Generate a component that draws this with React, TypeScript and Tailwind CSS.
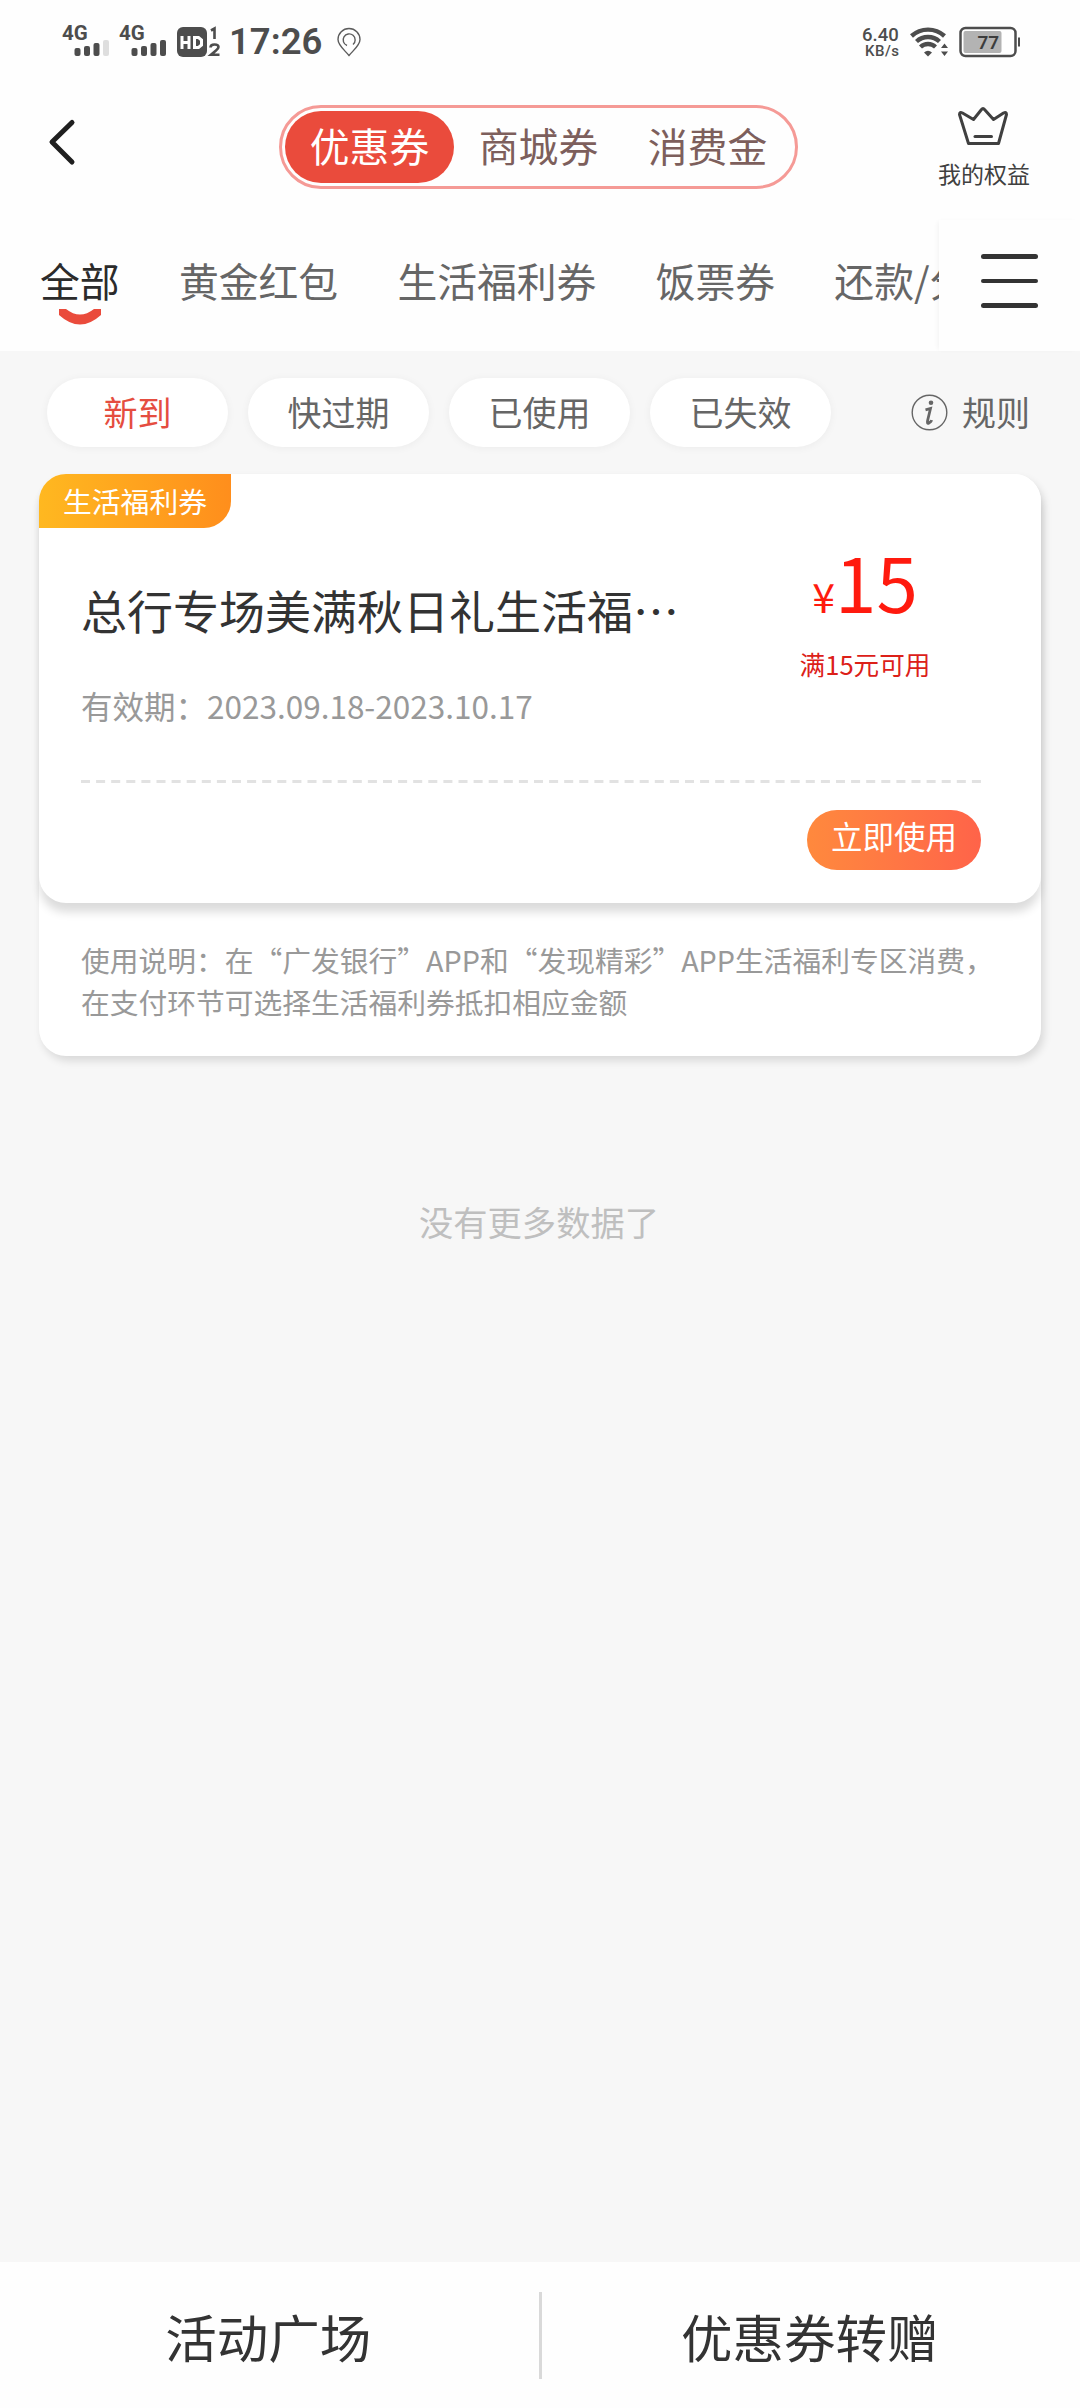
import React from 'react';

const segments = ['优惠券', '商城券', '消费金'];
const categories = ['全部', '黄金红包', '生活福利券', '饭票券', '还款/分期'];
const filters = ['新到', '快过期', '已使用', '已失效'];

const Signal = ({ weak = false }: { weak?: boolean }) => (
  <svg width="50" height="34" viewBox="0 0 50 34" className="shrink-0 overflow-visible">
    <text x="0" y="16" fontSize="20.5" fontWeight="700" fill="#4d4d4d" fontFamily="Roboto">4G</text>
    <rect x="12.5" y="24" width="6" height="8" rx="2" fill="#4d4d4d" />
    <rect x="22" y="22" width="6" height="10" rx="2" fill="#4d4d4d" />
    <rect x="31.5" y="19" width="6" height="13" rx="2" fill="#4d4d4d" />
    <rect x="41" y="16" width="6" height="16" rx="2" fill={weak ? '#dedede' : '#4d4d4d'} />
  </svg>
);

const StatusBar = () => (
  <div className="flex h-20 items-start justify-between pt-6 pl-[62px] pr-[60px] font-[Roboto] text-[#4d4d4d]">
    <div className="flex items-start">
      <div className="flex gap-[7px]">
        <Signal weak />
        <Signal />
      </div>
      <svg width="44" height="36" viewBox="0 0 44 36" className="ml-[8px] shrink-0">
        <rect x="0" y="3" width="30" height="30" rx="6" fill="#4d4d4d" />
        <g fill="none" stroke="#fff" strokeWidth="3">
          <path d="M5 12v13M12 12v13M5 18.5h7" />
          <path d="M17.5 13.5h4l3 2.5v5l-3 2.5h-4z" />
        </g>
        <path d="M34 6.500L37.500 4.500V15" fill="none" stroke="#4d4d4d" strokeWidth="2.600" />
        <path d="M33.500 23.500q0-3 4-3t4 2.500q0 1.500-2.500 3.500l-5 4.200h8.500" fill="none" stroke="#4d4d4d" strokeWidth="2.600" />
      </svg>
      <span className="ml-[8px] w-[95px] text-[36.5px] leading-[36px] font-semibold">17:26</span>
      <svg width="26" height="34" viewBox="0 0 26 34" fill="none" stroke="#5c5c5c" strokeWidth="1.4" className="ml-[12px] shrink-0">
        <path d="M13 31.500C9 26.500 2 21.500 2 15.500a11 11 0 0 1 22 0c0 6-7 11-11 16z" />
        <path d="M11 21.500a6 6 0 1 1 6-1" />
      </svg>
    </div>
    <div className="flex items-start">
      <div className="flex w-[40px] flex-col pt-[3px] font-medium">
        <span className="text-[18.5px] leading-[17px]">6.40</span>
        <span className="pl-[3px] text-[15px] leading-[15px] tracking-[0.5px]">KB/s</span>
      </div>
      <svg width="38" height="34" viewBox="0 0 38 34" className="ml-[8px] shrink-0">
        <g fill="none" stroke="#4d4d4d" strokeWidth="4.4">
          <path d="M1.500 12a24.500 24.500 0 0 1 33 0" />
          <path d="M6.500 17.500a17 17 0 0 1 23 0" />
          <path d="M10.500 23a11 11 0 0 1 15 0" />
        </g>
        <path d="M14 28.500q4-3.500 8 0l-4 4z" fill="#4d4d4d" />
        <path d="M31 24l3.500-4.500L38 24zM31 27.500h7L34.500 32z" fill="#4d4d4d" />
      </svg>
      <svg width="61" height="34" viewBox="0 0 61 34" className="ml-[11px] shrink-0">
        <rect x="1.500" y="4" width="55" height="28" rx="5" fill="#fff" stroke="#4d4d4d" strokeWidth="2.5" />
        <rect x="4.500" y="7" width="38" height="22" rx="2" fill="#b3b3b3" />
        <path d="M60 13.500v9" stroke="#4d4d4d" strokeWidth="2" />
        <text x="18.5" y="25" fontSize="19" fontWeight="600" fill="#3d3d3d" fontFamily="Roboto">77</text>
      </svg>
    </div>
  </div>
);

const Header = () => (
  <header className="flex h-[140px] items-start pl-[47px] pr-[50px]">
    <svg width="30" height="50" viewBox="0 0 30 50" fill="none" stroke="#1f1f1f" strokeWidth="5" strokeLinecap="round" strokeLinejoin="round" className="mt-[37px]">
      <path d="M25 5.500L5 25l20 20" />
    </svg>
    <div className="mt-[25px] ml-[202px] flex h-[84px] w-[519px] rounded-full border-[3px] border-[#f59a96] p-[3px]">
      {segments.map((name, i) => (
        <div
          key={name}
          className={`flex h-full w-[169px] items-center justify-center rounded-full pb-[5px] text-[39.8px] ${
            i === 0 ? 'bg-[#ea4b3c] text-white' : 'text-[#7d5f5c]'
          }`}
        >
          {name}
        </div>
      ))}
    </div>
    <div className="ml-auto flex w-[92px] flex-col items-center pt-[25px]">
      <svg width="52" height="42" viewBox="0 0 52 42" fill="none" stroke="#404040" strokeWidth="3" strokeLinecap="round" strokeLinejoin="round" className="mr-[3px] shrink-0">
        <path d="M11.500 38.500L2.500 9.500Q2.500 6.500 5.500 8L16.500 14.500L24.500 4.500Q26 2.500 27.500 4.500L36.500 14.500L46.500 8Q49.500 6.500 49.500 9.500L41.500 38.500Z" />
        <path d="M18 31.500h16.500" />
      </svg>
      <span className="mt-[9px] text-[23px] leading-[34px] whitespace-nowrap text-[#404040]">我的权益</span>
    </div>
  </header>
);

const CategoryTabs = () => (
  <nav className="flex h-[131px]">
    <div className="flex w-[939px] gap-[59.3px] overflow-hidden pt-[31px] pl-[40px]">
      {categories.map((name, i) => (
        <div key={name} className="flex shrink-0 flex-col items-center">
          <span className={`text-[39.8px] leading-[58px] whitespace-nowrap ${i === 0 ? 'text-[#2b2b2b]' : 'text-[#666]'}`}>
            {name}
          </span>
          {i === 0 && (
            <svg width="44" height="17" viewBox="0 0 44 17">
              <path d="M1 0H8Q22 11 36 0H43V6Q22 25 1 6Z" fill="#ea4b3c" />
            </svg>
          )}
        </div>
      ))}
    </div>
    <div className="flex w-[141px] flex-col items-center gap-5 pt-[34px] pr-px shadow-[-3px_0_5px_-2px_rgba(0,0,0,0.05)]">
      <div className="h-[4.5px] w-[57px] rounded-full bg-[#333]" />
      <div className="h-[4.5px] w-[57px] rounded-full bg-[#333]" />
      <div className="h-[4.5px] w-[57px] rounded-full bg-[#333]" />
    </div>
  </nav>
);

const Filters = () => (
  <div className="flex items-center pt-[27px] pr-[50px] pl-[47px]">
    <div className="flex gap-5">
      {filters.map((name, i) => (
        <div
          key={name}
          className={`flex h-[69px] w-[181px] items-center justify-center rounded-full bg-white pb-[3px] text-[34px] shadow-[0_1px_8px_rgba(0,0,0,0.05)] ${
            i === 0 ? 'text-[#e54d40]' : 'text-[#666]'
          }`}
        >
          {name}
        </div>
      ))}
    </div>
    <div className="ml-auto flex items-center gap-[14px] text-[34px] text-[#666]">
      <svg width="37" height="37" viewBox="0 0 37 37">
        <circle cx="18.5" cy="18.5" r="17.3" fill="none" stroke="#666" strokeWidth="1.4" />
        <circle cx="20" cy="8.8" r="2.3" fill="#666" />
        <path d="M14.500 15.800l5-1.300-2.900 12q-.8 3.700 1.400 2.500t2.700-2.800" fill="none" stroke="#666" strokeWidth="2.8" />
      </svg>
      <span className="pb-[3px]">规则</span>
    </div>
  </div>
);

const CouponCard = () => (
  <div className="mx-[39px] mt-[27px] rounded-[27px] bg-white shadow-[3px_5px_9px_rgba(0,0,0,0.12)]">
    <div className="flex h-[429px] flex-col rounded-[27px] bg-white shadow-[0_10px_10px_-1px_rgba(0,0,0,0.14)]">
      <div className="flex h-[54px] w-[192px] items-center justify-center rounded-tl-[27px] rounded-br-[27px] bg-linear-to-r from-[#ffb820] to-[#ff8e1c] text-[28.8px] text-white">
        生活福利券
      </div>
      <div className="flex h-[252px] justify-between pr-[61px] pl-[42px]">
        <div className="pt-[47px]">
          <div className="w-[600px] truncate text-[46px] leading-[68px] text-[#333]">总行专场美满秋日礼生活福…</div>
          <div className="mt-[39px] text-[31.5px] leading-[46px] text-[#999]">有效期：2023.09.18-2023.10.17</div>
        </div>
        <div className="flex w-[230px] flex-col items-center pt-[11px] text-[#ff1a0e]">
          <div className="flex items-baseline leading-[84px]">
            <span className="text-[41px]">¥</span>
            <span className="text-[74.5px]">15</span>
          </div>
          <div className="mt-[8px] text-[25.6px] leading-[38px] text-[#dc2018]">满15元可用</div>
        </div>
      </div>
      <svg width="900" height="3" viewBox="0 0 900 3" className="ml-[42px] shrink-0">
        <path d="M0 1.500H900" stroke="#e2e2e2" strokeWidth="3" strokeDasharray="9 6.1" />
      </svg>
      <div className="mt-[27px] mr-[60px] flex h-[60px] w-[174px] justify-center self-end rounded-full bg-linear-to-r from-[#ff893d] to-[#ff6349] text-[31.5px] leading-[51px] text-white">
        立即使用
      </div>
    </div>
    <p className="h-[153px] pt-[36px] pl-[42px] text-[28.75px] leading-[42px] whitespace-nowrap text-[#999]">
      使用说明：在“广发银行”APP和“发现精彩”APP生活福利专区消费，
      <br />
      在支付环节可选择生活福利券抵扣相应金额
    </p>
  </div>
);

export default function App() {
  return (
    <div
      lang="zh-CN"
      className="flex h-[2408px] w-[1080px] flex-col overflow-hidden bg-[#f7f7f7] font-['Noto_Sans_CJK_SC',sans-serif]"
    >
      <div className="bg-[#fefefe]">
        <StatusBar />
        <Header />
        <CategoryTabs />
      </div>

      <main className="flex-1">
        <Filters />
        <CouponCard />
        <p className="mt-[140px] pr-[2px] text-center text-[34.3px] leading-[50px] text-[#bfbfbf]">没有更多数据了</p>
      </main>

      <footer className="flex h-[146px] items-center bg-[#fefefe] text-[51.5px] text-[#333]">
        <div className="flex-1 pt-px pr-[2px] text-center">活动广场</div>
        <div className="h-[87px] w-[3px] bg-[#d9d9d9]" />
        <div className="flex-1 pt-px pr-[2px] text-center">优惠券转赠</div>
      </footer>
    </div>
  );
}
